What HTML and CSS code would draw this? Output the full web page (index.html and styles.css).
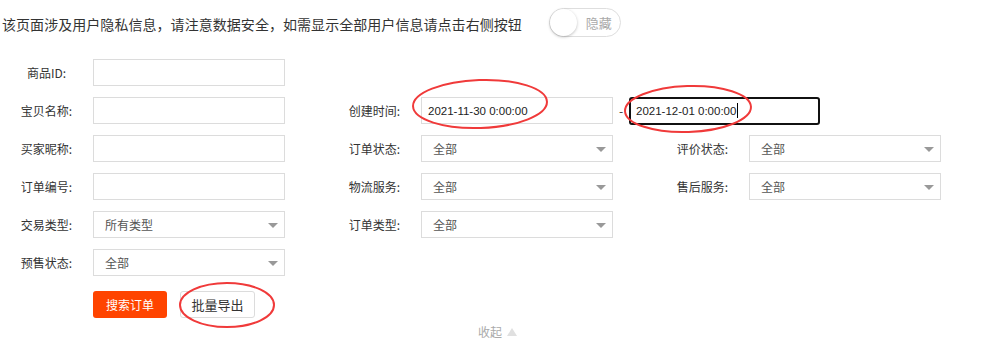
FILE: index.html
```html
<!DOCTYPE html>
<html lang="zh-CN">
<head>
    <meta charset="UTF-8">
    <title>订单查询</title>
    <link rel="stylesheet" href="styles.css">
</head>
<body>
    <div class="page">
        <div class="notice">
            <span class="notice-text">该页面涉及用户隐私信息，请注意数据安全，如需显示全部用户信息请点击右侧按钮</span>
            <div class="switch">
                <span class="switch-knob"></span>
                <span class="switch-text">隐藏</span>
            </div>
        </div>

        <div class="search-form">
            <div class="form-item new-row">
                <label>商品ID:</label>
                <input class="field" type="text">
            </div>

            <div class="form-item new-row">
                <label>宝贝名称:</label>
                <input class="field" type="text">
            </div>
            <div class="form-item span-2">
                <label>创建时间:</label>
                <input class="field date" type="text" value="2021-11-30 0:00:00">
                <span class="range-sep">-</span>
                <div class="field date focused">2021-12-01 0:00:00<span class="caret"></span></div>
            </div>

            <div class="form-item new-row">
                <label>买家昵称:</label>
                <input class="field" type="text">
            </div>
            <div class="form-item">
                <label>订单状态:</label>
                <div class="field select">全部</div>
            </div>
            <div class="form-item">
                <label>评价状态:</label>
                <div class="field select">全部</div>
            </div>

            <div class="form-item new-row">
                <label>订单编号:</label>
                <input class="field" type="text">
            </div>
            <div class="form-item">
                <label>物流服务:</label>
                <div class="field select">全部</div>
            </div>
            <div class="form-item">
                <label>售后服务:</label>
                <div class="field select">全部</div>
            </div>

            <div class="form-item new-row">
                <label>交易类型:</label>
                <div class="field select">所有类型</div>
            </div>
            <div class="form-item">
                <label>订单类型:</label>
                <div class="field select">全部</div>
            </div>

            <div class="form-item new-row">
                <label>预售状态:</label>
                <div class="field select">全部</div>
            </div>
        </div>

        <div class="actions">
            <button class="btn btn-primary">搜索订单</button>
            <button class="btn btn-default">批量导出</button>
        </div>

        <div class="collapse">收起<span class="collapse-arrow"></span></div>

        <!-- hand-drawn marks over the screenshot -->
        <svg class="marks" width="983" height="342" viewBox="0 0 983 342">
            <ellipse cx="480" cy="104" rx="67" ry="24" transform="rotate(-2 480 104)"></ellipse>
            <ellipse cx="688" cy="109" rx="63" ry="23" transform="rotate(-2 688 109)"></ellipse>
            <ellipse cx="227" cy="305" rx="47" ry="22"></ellipse>
        </svg>
    </div>
</body>
</html>
```

FILE: styles.css
```css
body {
    margin: 0;
    font-family: "Noto Sans CJK SC", "Liberation Sans", sans-serif;
    color: #333;
    background: #fff;
}

.page {
    position: relative;
    width: 983px;
    height: 342px;
    overflow: hidden;
}

/* top notice + privacy switch */
.notice {
    display: flex;
    align-items: center;
    height: 45px;
    padding-left: 2px;
}

.notice-text {
    font-size: 14px;
    letter-spacing: 0.05px;
    line-height: 20px;
    color: #333;
    margin-top: 2px;
}

.switch {
    position: relative;
    display: flex;
    align-items: center;
    justify-content: flex-end;
    box-sizing: border-box;
    width: 72px;
    height: 29px;
    margin-left: 27px;
    padding-right: 8px;
    border: 1px solid #dedede;
    border-radius: 15px;
    background: #fff;
}

.switch-knob {
    position: absolute;
    left: 0;
    top: 0;
    width: 27px;
    height: 27px;
    border-radius: 50%;
    background: #fff;
    box-shadow: 0 1px 3px rgba(0, 0, 0, 0.25);
}

.switch-text {
    font-size: 13px;
    color: #aaa;
    line-height: 27px;
}

/* search form */
.search-form {
    display: grid;
    grid-template-columns: repeat(3, 328px);
    row-gap: 11px;
    margin-top: 14px;
}

.form-item {
    display: flex;
    align-items: center;
    height: 27px;
}

.form-item.new-row {
    grid-column: 1;
}

.form-item.span-2 {
    grid-column: span 2;
}

.form-item label {
    width: 93px;
    flex-shrink: 0;
    text-align: center;
    font-size: 12px;
    line-height: 27px;
    color: #333;
}

.field {
    box-sizing: border-box;
    width: 192px;
    height: 27px;
    margin: 0;
    border: 1px solid #dcdcdc;
    border-radius: 0;
    background: #fff;
    font-family: inherit;
    outline: none;
}

.field.date {
    display: flex;
    align-items: center;
    padding: 0 6px;
    font-family: "Liberation Sans", sans-serif;
    font-size: 11.5px;
    color: #222;
}

.field.focused {
    width: 191px;
    height: 28px;
    border: 2px solid #111;
    border-radius: 3px;
    padding-left: 5px;
}

.caret {
    display: inline-block;
    width: 1px;
    height: 15px;
    margin-left: 1px;
    background: #000;
}

.range-sep {
    width: 16px;
    text-align: center;
    font-size: 12px;
    color: #333;
}

.field.select {
    position: relative;
    padding-left: 11px;
    font-size: 12px;
    line-height: 25px;
    color: #555;
}

.field.select::after {
    content: "";
    position: absolute;
    right: 6px;
    top: 11px;
    border-left: 5px solid transparent;
    border-right: 5px solid transparent;
    border-top: 5px solid #999;
}

/* buttons */
.actions {
    display: flex;
    gap: 13px;
    margin: 15px 0 0 93px;
}

.btn {
    box-sizing: border-box;
    height: 27px;
    padding: 0;
    border-radius: 3px;
    font-family: inherit;
    font-size: 12px;
    cursor: pointer;
}

.btn-primary {
    width: 74px;
    border: none;
    background: #ff4400;
    color: #fff;
}

.btn-default {
    width: 75px;
    border: 1px solid #dcdcdc;
    background: #fff;
    color: #333;
    font-size: 13px;
}

/* collapse link */
.collapse {
    display: flex;
    justify-content: center;
    align-items: center;
    margin-top: 6px;
    padding-left: 12px;
    font-size: 12px;
    line-height: 16px;
    color: #aaa;
}

.collapse-arrow {
    margin-left: 5px;
    border-left: 5px solid transparent;
    border-right: 5px solid transparent;
    border-bottom: 8px solid #e0e0e0;
}

/* red annotation circles */
.marks {
    position: absolute;
    left: 0;
    top: 0;
    pointer-events: none;
}

.marks ellipse {
    fill: none;
    stroke: #f03a3a;
    stroke-width: 2;
}
```
